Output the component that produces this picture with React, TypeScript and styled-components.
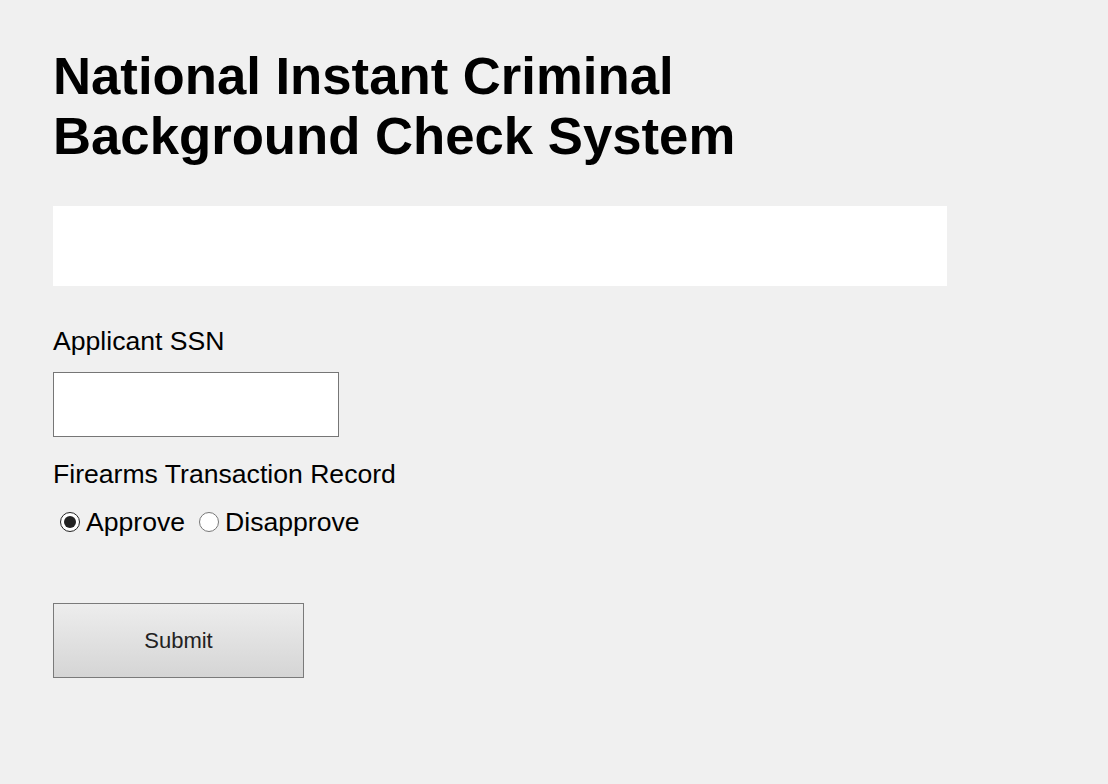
import React from "react";
import styled, { createGlobalStyle } from "styled-components";

const Global = createGlobalStyle`
  html, body { margin: 0; padding: 0; background: #f0f0f0; }
  body { font-family: "Liberation Sans", Arial, sans-serif; color: #000; }
`;

const Page = styled.main`
  padding: 46px 53px;
  display: flex;
  flex-direction: column;
  align-items: flex-start;
`;

const Title = styled.h1`
  margin: 0;
  font-size: 52.7px;
  line-height: 60px;
  font-weight: 700;
`;

const Banner = styled.div`
  margin-top: 40px;
  width: 894px;
  height: 80px;
  background: #fff;
`;

const Label = styled.label<{ $top: number }>`
  margin-top: ${(p) => p.$top}px;
  font-size: 26.6px;
  line-height: 30px;
`;

const TextInput = styled.input`
  margin-top: 16px;
  width: 286px;
  height: 65px;
  box-sizing: border-box;
  border: 1px solid #767676;
  background: #fff;
  font-size: 20px;
`;

const RadioRow = styled.div`
  margin-top: 18px;
  display: flex;
  align-items: center;
  padding-left: 7px;
  font-size: 26.6px;
  line-height: 30px;
`;

const RadioOption = styled.label`
  display: flex;
  align-items: center;
  margin-right: 14px;
`;

const Radio = styled.input`
  margin: 0 6px 0 0;
  width: 20px;
  height: 20px;
  accent-color: #222;
`;

const Button = styled.button`
  margin-top: 66px;
  width: 251px;
  height: 75px;
  border: 1px solid #7a7a7a;
  background: linear-gradient(#ededed, #d5d5d5);
  font-family: "Liberation Sans", Arial, sans-serif;
  font-size: 22px;
  color: #222;
`;

export default function App() {
  return (
    <>
      <Global />
      <Page>
        <Title>
          National Instant Criminal
          <br />
          Background Check System
        </Title>
        <Banner />
        <Label $top={40}>Applicant SSN</Label>
        <TextInput type="text" />
        <Label $top={22}>Firearms Transaction Record</Label>
        <RadioRow>
          <RadioOption>
            <Radio type="radio" name="ftr" defaultChecked />
            Approve
          </RadioOption>
          <RadioOption>
            <Radio type="radio" name="ftr" />
            Disapprove
          </RadioOption>
        </RadioRow>
        <Button>Submit</Button>
      </Page>
    </>
  );
}
